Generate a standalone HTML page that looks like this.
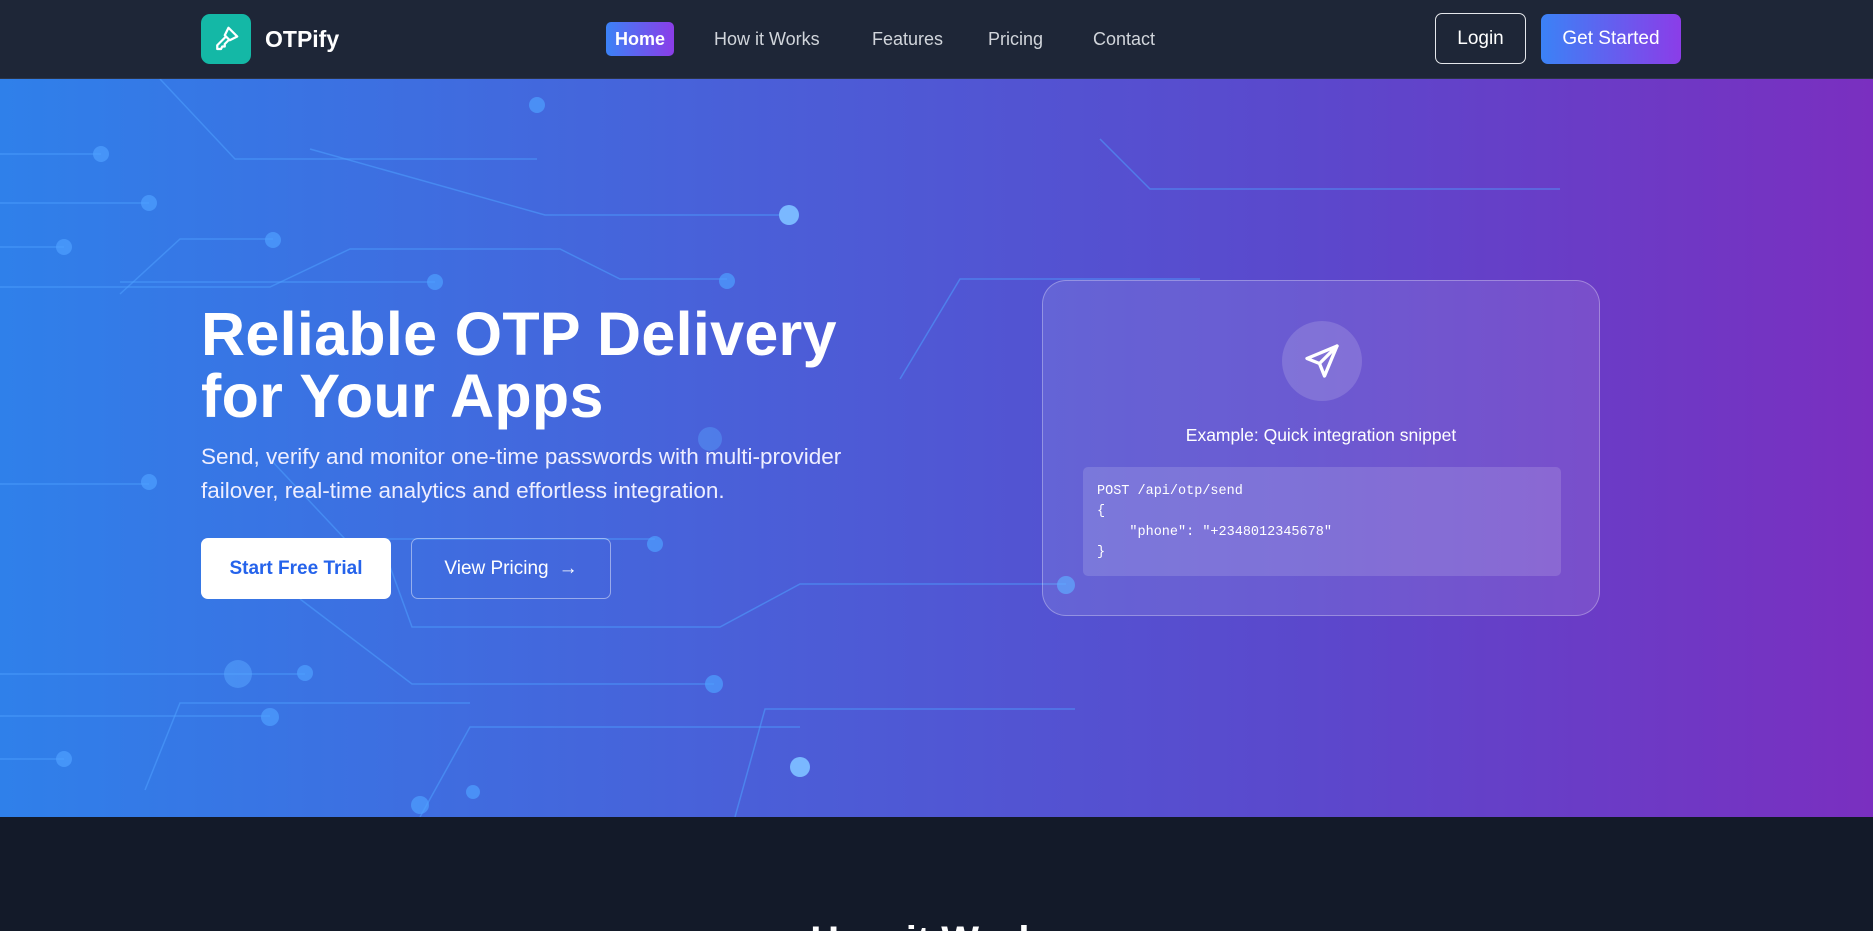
<!DOCTYPE html>
<html><head><meta charset="utf-8"><style>
*{margin:0;padding:0;box-sizing:border-box}
html,body{width:1873px;height:931px;overflow:hidden}
body{background:#131a29;font-family:"Liberation Sans","DejaVu Sans",sans-serif;color:#fff;position:relative}
nav{position:absolute;left:0;top:0;width:1873px;height:79px;background:#1e2637;border-bottom:1px solid #2b3447}
.logo{position:absolute;left:201px;top:14px;width:50px;height:50px;border-radius:9px;background:#14b8a6;display:flex;align-items:center;justify-content:center}
.brand{position:absolute;left:265px;top:26px;font-size:23px;font-weight:bold}
.nl{position:absolute;top:29px;font-size:18px;color:#d1d5db}
.home{position:absolute;left:606px;top:22px;width:68px;height:34px;border-radius:5px;background:linear-gradient(90deg,#3b82f6,#8b3de8);font-size:18px;font-weight:bold;display:flex;align-items:center;justify-content:center}
.login{position:absolute;left:1435px;top:13px;width:91px;height:51px;border:1px solid #e5e7eb;border-radius:7px;display:flex;align-items:center;justify-content:center;font-size:19px}
.gs{position:absolute;left:1541px;top:14px;width:140px;height:50px;border-radius:7px;background:linear-gradient(90deg,#3b82f6,#8b3de8);display:flex;align-items:center;justify-content:center;font-size:19px}
.hero{position:absolute;left:0;top:79px;width:1873px;height:738px;background:linear-gradient(90deg,#2f80ea 0%,#4a5fd8 40%,#5b48cc 70%,#7a2fc0 100%);overflow:hidden}
h1{position:absolute;left:201px;top:224px;font-size:61px;line-height:62px;font-weight:bold;letter-spacing:0.3px}
.p{position:absolute;left:201px;top:361px;font-size:22.5px;line-height:34px;color:#eef}
.b1{position:absolute;left:201px;top:459px;width:190px;height:61px;border-radius:7px;background:#fff;color:#2563eb;font-size:19px;font-weight:bold;display:flex;align-items:center;justify-content:center}
.b2{position:absolute;left:411px;top:459px;width:200px;height:61px;border-radius:7px;border:1px solid rgba(255,255,255,.45);font-size:19px;display:flex;align-items:center;justify-content:center;gap:10px}
.card{position:absolute;left:1042px;top:280px;width:558px;height:336px;border-radius:24px;border:1px solid rgba(255,255,255,.3);background:rgba(255,255,255,.1)}
.ic{position:absolute;left:239px;top:40px;width:80px;height:80px;border-radius:50%;background:rgba(255,255,255,.15);display:flex;align-items:center;justify-content:center}
.cap{position:absolute;left:0;width:100%;top:144px;text-align:center;font-size:17.5px}
.code{position:absolute;left:40px;top:186px;width:478px;height:109px;border-radius:5px;background:rgba(255,255,255,.14);padding:15px 14px;font-family:"Liberation Mono","DejaVu Sans Mono",monospace;font-size:13.5px;line-height:20.3px;white-space:pre}
.clip{position:absolute;left:0;top:817px;width:1873px;height:114px;overflow:hidden}
.hw{position:absolute;top:100px;width:100%;text-align:center;font-size:40px;font-weight:bold;line-height:48px}
</style></head><body>
<div class="hero">
<svg width="1873" height="738" style="position:absolute;left:0;top:0" fill="none" stroke="#4ea0ff" stroke-opacity=".55" stroke-width="1.5">
<path d="M160 0 L235 80 H537"/><circle cx="537" cy="26" r="8" fill="#4ea0ff" fill-opacity=".7" stroke="none"/>
<path d="M0 75 H101"/><circle cx="101" cy="75" r="8" fill="#4ea0ff" stroke="none" fill-opacity=".7"/>
<path d="M0 124 H149"/><circle cx="149" cy="124" r="8" fill="#4ea0ff" stroke="none" fill-opacity=".7"/>
<path d="M0 168 H64"/><circle cx="64" cy="168" r="8" fill="#4ea0ff" stroke="none" fill-opacity=".7"/>
<path d="M310 70 L545 136 H789"/><circle cx="789" cy="136" r="10" fill="#7ab8ff" stroke="none"/>
<path d="M120 215 L180 160 H273"/><circle cx="273" cy="161" r="8" fill="#4ea0ff" stroke="none" fill-opacity=".7"/>
<path d="M0 208 H270 L350 170 H560 L620 200 H727"/><circle cx="727" cy="202" r="8" fill="#4ea0ff" stroke="none" fill-opacity=".7"/>
<path d="M120 203 H435"/><circle cx="435" cy="203" r="8" fill="#4ea0ff" stroke="none" fill-opacity=".7"/>
<path d="M0 405 H149"/><circle cx="149" cy="403" r="8" fill="#4ea0ff" stroke="none" fill-opacity=".7"/>
<path d="M270 380 L345 460 H655"/><circle cx="655" cy="465" r="8" fill="#4ea0ff" stroke="none" fill-opacity=".7"/>
<path d="M380 460 L412 548 H720 L800 505 H1066"/><circle cx="1066" cy="506" r="9" fill="#4ea0ff" stroke="none" fill-opacity=".7"/>
<path d="M0 595 H305"/><circle cx="305" cy="594" r="8" fill="#4ea0ff" stroke="none" fill-opacity=".7"/>
<path d="M300 520 L412 605 H714"/><circle cx="714" cy="605" r="9" fill="#4ea0ff" stroke="none" fill-opacity=".7"/>
<path d="M0 637 H270"/><circle cx="270" cy="638" r="9" fill="#4ea0ff" stroke="none" fill-opacity=".7"/>
<path d="M0 680 H64"/><circle cx="64" cy="680" r="8" fill="#4ea0ff" stroke="none" fill-opacity=".7"/>
<path d="M145 711 L180 624 H470"/><circle cx="473" cy="713" r="7" fill="#4ea0ff" stroke="none" fill-opacity=".7"/>
<path d="M420 738 L470 648 H800"/><circle cx="800" cy="688" r="10" fill="#7ab8ff" stroke="none"/>
<path d="M735 738 L765 630 H1075"/>
<path d="M900 300 L960 200 H1200"/><path d="M1100 60 L1150 110 H1560"/>
<circle cx="238" cy="595" r="14" fill="#5aa8ff" fill-opacity=".5" stroke="none"/>
<circle cx="710" cy="360" r="12" fill="#5aa8ff" fill-opacity=".4" stroke="none"/>
<circle cx="420" cy="726" r="9" fill="#4ea0ff" stroke="none" fill-opacity=".7"/>
</svg>
<h1>Reliable OTP Delivery<br>for Your Apps</h1>
<div class="p">Send, verify and monitor one-time passwords with multi-provider<br>failover, real-time analytics and effortless integration.</div>
<div class="b1">Start Free Trial</div>
<div class="b2">View Pricing <span>→</span></div>
</div>
<div class="card">
<div class="ic"><svg width="40" height="40" viewBox="0 0 24 24" fill="none" stroke="#fff" stroke-width="2" stroke-linejoin="round" stroke-linecap="round"><path d="M21 3 L3 10.5 L10.5 13.5 L13.5 21 Z"/><path d="M21 3 L10.5 13.5"/></svg></div>
<div class="cap">Example: Quick integration snippet</div>
<div class="code">POST /api/otp/send
{
    "phone": "+2348012345678"
}</div>
</div>
<nav>
<div class="logo"><svg width="30" height="30" viewBox="0 0 24 24" fill="none" stroke="#fff" stroke-width="1.8" stroke-linejoin="round"><path d="M14 3 L21 10 L15 13 L11 9 Z"/><path d="M12 10 L5 17 L5 20 L8 20 L9 18 L11 18 L11 16 L14 13"/></svg></div>
<div class="brand">OTPify</div>
<div class="home">Home</div>
<div class="nl" style="left:714px">How it Works</div>
<div class="nl" style="left:872px">Features</div>
<div class="nl" style="left:988px">Pricing</div>
<div class="nl" style="left:1093px">Contact</div>
<div class="login">Login</div>
<div class="gs">Get Started</div>
</nav>
<div class="clip"><div class="hw">How it Works</div></div>
</body></html>
